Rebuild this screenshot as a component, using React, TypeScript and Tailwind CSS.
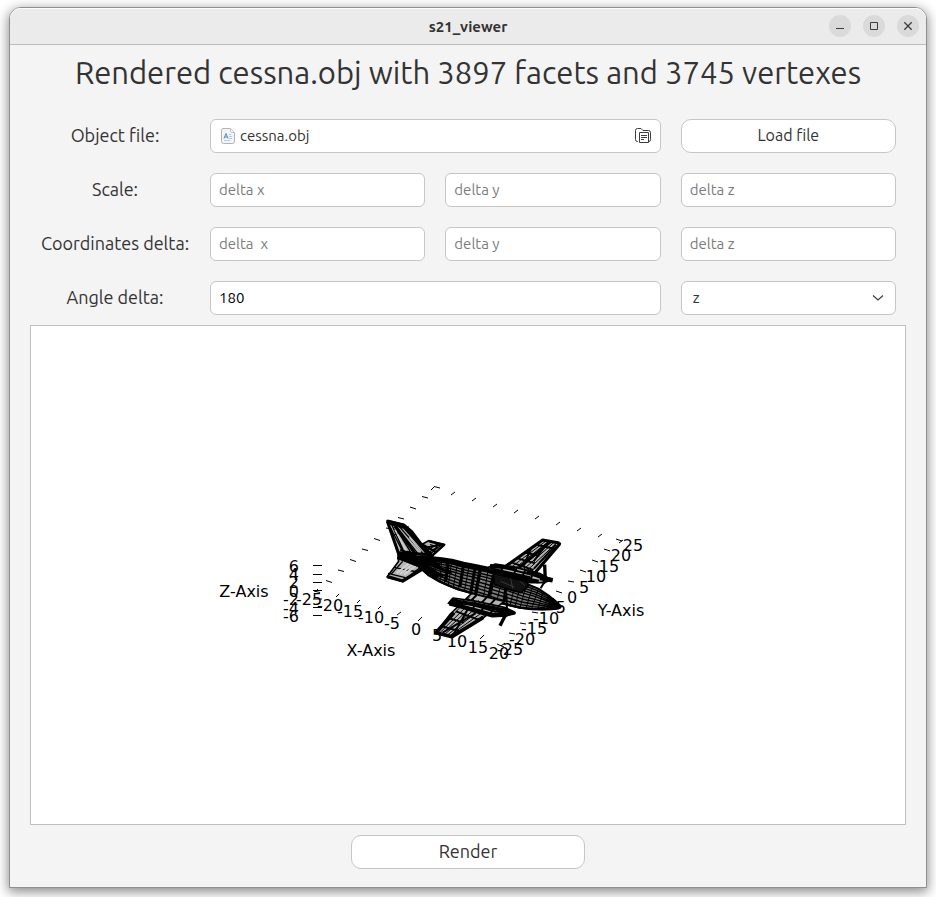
import React from "react";

type Pt = [number, number];

const field =
  "h-[34px] w-full min-w-0 rounded-md border border-[#c6c6c6] bg-white text-[15px] leading-5";
const button =
  "h-[34px] rounded-[10px] border border-[#c6c6c6] bg-white pb-0.5 text-center text-[#333]";
const label = "pb-0.5 text-center text-[18px] leading-6";

function TitleBar() {
  return (
    <header className="grid h-[37px] grid-cols-[1fr_auto_1fr] items-center rounded-t-[11px] border-b border-[#bcbcbc] bg-[#ebebeb] shadow-[inset_0_1px_0_#fbfbfb]">
      <span />
      <h1 className="pt-px text-[15px] leading-5 font-bold">s21_viewer</h1>
      <div className="flex justify-end gap-3 pr-[7px]">
        <button aria-label="Minimize" className="flex size-[22px] items-center justify-center rounded-full bg-[#dadada]">
          <svg width="16" height="16" viewBox="0 0 16 16" stroke="#3d3d3d" fill="none">
            <path d="M4 10.5h8" />
          </svg>
        </button>
        <button aria-label="Maximize" className="flex size-[22px] items-center justify-center rounded-full bg-[#dadada]">
          <svg width="16" height="16" viewBox="0 0 16 16" stroke="#3d3d3d" fill="none">
            <path d="M4.5 4.5h7v7h-7z" />
          </svg>
        </button>
        <button aria-label="Close" className="flex size-[22px] items-center justify-center rounded-full bg-[#dadada]">
          <svg width="16" height="16" viewBox="0 0 16 16" stroke="#3d3d3d" strokeWidth="1.3" fill="none">
            <path d="M4.3 4.3l7.4 7.4M11.7 4.3l-7.4 7.4" />
          </svg>
        </button>
      </div>
    </header>
  );
}

function DocumentIcon() {
  return (
    <svg width="16" height="16" viewBox="0 0 16 16" fill="none">
      <path d="M3 .5h7.5l4 4v9q0 2-2 2h-9q-2 0-2-2v-11q0-2 1.500-2z" fill="#f4f4f4" stroke="#b4b4b4" />
      <path d="M10.500 .5v2.500q0 1.500 1.500 1.500h2.500z" fill="#fff" stroke="#c4c4c4" />
      <path d="M4 10.500l2-5 2 5M4.800 9h2.400" stroke="#4b8fc0" />
      <path d="M9 6.500h2M9 8.500h3M9 10.500h3M4 12.500h6" stroke="#a5d3ee" />
    </svg>
  );
}

function FolderIcon() {
  return (
    <svg width="16" height="16" viewBox="0 0 16 16" fill="none" stroke="#3d3d3d">
      <path d="M3 13.500h-.5q-2 0-2-2v-9q0-2 2-2h3.500l2 2h5.500q2 0 2 2v7q0 2-1.500 2" />
      <path d="M4.500 4.500h9v10h-9z" fill="#fff" />
      <path d="M6 7.500h6M6 9.500h6M6 11.500h3" />
    </svg>
  );
}

/* Tick marks, as start and end points */
const ticks =
  "M313 565.500h9M313 574.500h9M313 582.500h9M313 590.500h9M313 599h9M313 607.500h9M313 615.500h9" +
  "M315 592l3-3M336 597l3-3M357 603l3-3M378 609l3-3M397 615l4-3M418 621l4-4M480 639l4-4M501 646l4-3" +
  "M497 644l7 3M509 633l6 1M520 623l6 1M532 612l6 1M556 591l6 2M568 581l6 1M580 570l6 2M592 560l6 2M604 549l6 2M616 539l6 2M619 543l4-3" +
  "M431 490l3-3M434 486.500l6 1.500M422 496.500l6 1.500M410 507l6 2M398 517.500l6 1.500M386 528l6 1M374 538.500l6 2M362 549l6 1.500M350 559.500l6 2M338 570l6 1.500M326 580.500l6 2M314 591l6 1.500" +
  "M451 495l4-3M472 501l4-3M493 507l4-3M514 513l4-3M535 519l4-3M556 525l4-3M577 531l4-3M598 537l4-3";

const zLabels: [string, number][] = [
  ["6", 572], ["4", 580], ["2", 588], ["0", 597], ["-2", 605], ["-4", 614], ["-6", 622],
];

const xLabels: [string, number, number][] = [
  ["-25", 309, 605], ["-20", 330, 611], ["-15", 350, 617], ["-10", 371, 623], ["-5", 392, 629],
  ["0", 416, 635], ["5", 437, 641], ["10", 457, 647], ["15", 478, 653], ["20", 499, 659],
];

const yLabels: [string, number, number][] = [
  ["25", 633, 551], ["20", 621, 561], ["15", 609, 572], ["10", 596, 582], ["5", 584, 593],
  ["0", 572, 603], ["-5", 558, 613], ["-10", 546, 624], ["-15", 534, 634], ["-20", 522, 645],
  ["-25", 510, 655],
];

/* Outline of the fuselage: matching stations along the top and the keel */
const top: Pt[] = [
  [55, 136], [110, 144], [150, 146], [185, 150], [215, 154], [250, 163], [285, 170], [325, 178], [370, 190],
  [410, 206], [440, 222], [475, 236], [505, 256], [525, 272], [540, 290],
];
const keel: Pt[] = [
  [60, 146], [115, 168], [145, 195], [180, 215], [205, 226], [235, 238], [270, 248], [310, 262], [350, 276],
  [390, 286], [420, 293], [455, 297], [490, 298], [515, 297], [538, 294],
];

function mix(a: Pt, b: Pt, t: number): Pt {
  return [Math.round(a[0] + (b[0] - a[0]) * t), Math.round(a[1] + (b[1] - a[1]) * t)];
}

function polyline(points: Pt[]) {
  return "M" + points.map((p) => p.join(" ")).join("L");
}

/* Parallel lines from edge a-b to edge c-d */
function hatch(a: Pt, b: Pt, c: Pt, d: Pt, count: number) {
  return Array.from({ length: count + 1 }, (_, i) =>
    polyline([mix(a, b, i / count), mix(c, d, i / count)]),
  ).join("");
}

const strakes = [0.1, 0.2, 0.3, 0.4, 0.52, 0.64, 0.76, 0.88]
  .map((t) => polyline(top.map((p, i) => mix(p, keel[i], t))))
  .join("");

const frames = top
  .slice(0, -1)
  .flatMap((p, i) =>
    [0, 0.5].map((t) => polyline([mix(p, top[i + 1], t), mix(keel[i], keel[i + 1], t)])),
  )
  .join("");

function Plane() {
  return (
    <g transform="translate(380 510) scale(.3333)" stroke="#000" strokeWidth="5" strokeLinejoin="round" fill="#b4b4b4">
      <g>
        <path d="M126 103l20-11 48 12-38 34-40-18z" />
        <path d="M133 112l55-8M140 122l34-21M150 104l22 7-28 18M148 134l36-30" strokeWidth="4" fill="none" />
        <path d="M148 94l44 11-12 11M156 138l34-32M126 103l40 22" strokeWidth="7" fill="none" />
      </g>
      <g>
        <path d="M376 170L488 90l53 10-76 86z" />
        <path d={hatch([385, 166], [455, 183], [490, 91], [538, 100], 6)} strokeWidth="3" fill="none" />
        <path d="M470 104l52 12M438 128l40 10M415 146l50 14M396 158l64 22M452 118l-22 52M505 96l-44 58M528 104l-66 72" strokeWidth="6" fill="none" />
        <path d="M378 168L488 90l50 9M540 101l-72 84M512 95l-98 80" strokeWidth="9" fill="none" />
      </g>
      <g>
        <path d="M54 142l80 16-8 20-58 36-47-13 35-47z" />
        <path d="M24 190l52 13M34 192l34-38M80 204l54-42M42 172l70 14" strokeWidth="4" fill="none" />
        <path d="M22 200l46 13 58-35" strokeWidth="10" fill="none" />
        <path d="M50 190l42-34M60 193l46-36M72 194l40-30" stroke="#d2d2d2" strokeWidth="6" />
      </g>
      <g>
        <path d="M21 32l50 12 24 20 32 42 32 36 24 10-108-8-16-8z" />
        <path d="M32 37l46 102M41 44l57 92M48 48l68 86M58 50l72 82M67 50l77 83M32 54l42 82M60 120l70 15M43 75l15-8" strokeWidth="4" fill="none" />
        <path d="M45 48l60 82M73 50l70 82" strokeWidth="9" fill="none" />
        <path d="M22 33l49 12 24 20 30 40 34 34M28 39l40 12 18 2M22 34l36 104M58 128l96 6" strokeWidth="9" fill="none" />
        <path d="M45 60l34 62M88 82l35 43" stroke="#d0d0d0" strokeWidth="4" />
      </g>
      <path d={polyline([...top, ...[...keel].reverse()]) + "z"} fill="#7c7c7c" strokeWidth="6" />
      <g fill="none">
        <path d={strakes} strokeWidth="4" />
        <path d={frames} strokeWidth="3" />
        <path d={polyline(top.slice(0, 9))} strokeWidth="16" />
        <path d={polyline(keel)} strokeWidth="7" />
        <path d="M55 145l100 20 60 24M120 160l70 40M205 160l-8 55M250 168l-10 62M285 175l-12 70M300 180l-14 74M340 196l-14 66M378 230l-6 46" strokeWidth="9" />
        <path d="M52 140l68 10 60 18M125 168l50 34" strokeWidth="15" />
        <path d="M515 268l24 22-22 4 6-14" strokeWidth="13" />
      </g>
      <path d="M340 192l55 0 38 16 14 18-24 22-38-10-42-14z" fill="#111" />
      <path d="M362 214l42 18M392 204l6 32M418 212l16 14" stroke="#4a4a4a" strokeWidth="2" />
      <g>
        <path d="M326 172l20-10 60 10 72 18 38 20-26 8-40 0-60-16-60-14z" />
        <path d="M330 174l120 28M350 168l120 30M345 180l110 30M372 168l-14 22M410 174l-12 26M436 180l-12 26M460 188l-12 28" strokeWidth="6" fill="none" />
        <path d="M330 168l76 6M330 182l80 20 66 13M440 184l40 16 32 10" strokeWidth="12" fill="none" />
        <path d="M494 164l2 48-6 8" strokeWidth="10" fill="none" />
        <path d="M492 218l-10 17" strokeWidth="6" />
        <path d="M480 204l38 7" strokeWidth="14" />
      </g>
      <g>
        <path d="M275 250l98 24-66 52-90 54-50-10 44-58z" />
        <path d={hatch([268, 262], [352, 290], [170, 368], [216, 380], 6)} strokeWidth="3" fill="none" />
        <path d="M182 348l58 16M204 324l48 14M228 304l70 26M258 268l82 22M290 255l-24 24M320 262l-24 26M345 268l-24 26M262 300l-44 78M286 310l-98 58" strokeWidth="6" fill="none" />
        <path d="M222 308l-54 60 48 12 94-58" strokeWidth="11" fill="none" />
      </g>
      <g>
        <path d="M205 280l14-16 70 10 84 18 30 16-24 10-42 2-60-16z" />
        <path d="M220 268l130 38M230 266l-10 20M252 270l-8 22M286 276l-8 24M312 282l-8 26M340 290l-10 26M210 276l120 36" strokeWidth="6" fill="none" />
        <path d="M212 272l80 12 76 16M208 281l80 20 50 14 38-4" strokeWidth="12" fill="none" />
        <path d="M379 250l2 50" strokeWidth="6" />
        <path d="M378 312l-18 35" strokeWidth="10" />
        <path d="M354 302l26-4 22 11-24 5z" strokeWidth="11" fill="#000" />
      </g>
    </g>
  );
}

function Plot() {
  return (
    <svg
      role="img"
      aria-label="3D plot of cessna.obj"
      viewBox="31 326 874 498"
      className="h-[498px] w-full font-['DejaVu_Sans',sans-serif] text-[16px] text-black"
      fill="currentColor"
    >
      <path d={ticks} stroke="#000" fill="none" />
      <Plane />
      <g textAnchor="end">
        {zLabels.map(([text, y]) => (
          <text key={text} x="299" y={y}>{text}</text>
        ))}
      </g>
      <g textAnchor="middle">
        {xLabels.map(([text, x, y]) => (
          <text key={text} x={x} y={y}>{text}</text>
        ))}
        {yLabels.map(([text, x, y]) => (
          <text key={text} x={x} y={y}>{text}</text>
        ))}
        <text x="244" y="597">Z-Axis</text>
        <text x="371" y="656">X-Axis</text>
        <text x="621" y="616">Y-Axis</text>
      </g>
    </svg>
  );
}

function DeltaInputs({ name, first }: { name: string; first: string }) {
  const style = `${field} px-2 pb-0.5 placeholder:text-[#7c7c7c]`;
  return (
    <>
      <input id={`${name}-x`} placeholder={first} className={style} />
      <input aria-label={`${name} y`} placeholder="delta y" className={style} />
      <input aria-label={`${name} z`} placeholder="delta z" className={style} />
    </>
  );
}

export default function App() {
  return (
    <div className="flex min-h-screen flex-col bg-white px-[9px] pt-[7px] pb-[9px] font-[Ubuntu,'Noto_Sans',sans-serif] text-[#333]">
      <main className="flex flex-1 flex-col rounded-t-xl border border-[#8f8f8f] bg-[#f4f4f4] shadow-[0_3px_12px_1px_rgba(0,0,0,0.45)]">
        <TitleBar />
        <h2 className="mt-[7px] text-center text-[31px] leading-[42px]">
          Rendered cessna.obj with 3897 facets and 3745 vertexes
        </h2>
        <form className="mt-[25px] grid grid-cols-[150px_1fr_1fr_1fr] items-center gap-5 px-[30px]">
          <label htmlFor="file" className={label}>Object file:</label>
          <button id="file" type="button" className={`${field} col-span-2 flex items-center gap-1 px-[9px] text-left`}>
            <DocumentIcon />
            <span className="flex-1">cessna.obj</span>
            <FolderIcon />
          </button>
          <button type="button" className={`${button} text-[16px] leading-5`}>Load file</button>

          <label htmlFor="scale-x" className={label}>Scale:</label>
          <DeltaInputs name="scale" first="delta x" />

          <label htmlFor="coordinates-x" className={`${label} whitespace-nowrap`}>Coordinates delta:</label>
          <DeltaInputs name="coordinates" first="delta  x" />

          <label htmlFor="angle" className={label}>Angle delta:</label>
          <input id="angle" defaultValue="180" className={`${field} col-span-2 px-2 pb-0.5 text-black`} />
          <div className="relative">
            <select aria-label="Axis" defaultValue="z" className={`${field} appearance-none px-[11px]`}>
              <option>x</option>
              <option>y</option>
              <option>z</option>
            </select>
            <svg width="12" height="8" viewBox="0 0 12 8" fill="none" stroke="#3d3d3d" strokeWidth="1.200" className="pointer-events-none absolute top-[13px] right-3">
              <path d="M1 1.500l5 4.500 5-4.500" />
            </svg>
          </div>
        </form>
        <section className="mx-5 mt-2.5 border border-[#c0c0c0] bg-white">
          <Plot />
        </section>
        <button className={`${button} mt-2.5 mb-4 w-[234px] self-center text-[18px] leading-6`}>Render</button>
      </main>
    </div>
  );
}
